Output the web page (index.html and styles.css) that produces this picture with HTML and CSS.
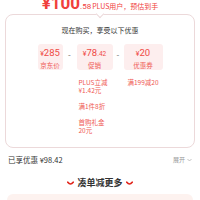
FILE: index.html
```html
<!DOCTYPE html>
<html>
<head>
<meta charset="utf-8">
<link rel="stylesheet" href="styles.css">
</head>
<body>
<div class="top"><span class="big">¥100</span><span class="dec">.58</span><span class="plus">PLUS用户，预估到手</span></div>
<div class="card">
  <div class="notch"></div>
  <div class="title">现在购买，享受以下优惠</div>
  <div class="row">
    <div class="col c1">
      <div class="box"><div class="price"><span class="yen">¥</span>285</div><div class="lab">京东价</div></div>
    </div>
    <div class="op o1">-</div>
    <div class="col c2">
      <div class="box"><div class="price"><span class="yen">¥</span>78<span class="small">.42</span></div><div class="lab">促销</div></div>
      <div class="sub">PLUS立减¥1.42元</div>
      <div class="sub">满1件8折</div>
      <div class="sub">首购礼金20元</div>
    </div>
    <div class="op o2">-</div>
    <div class="col c3">
      <div class="box"><div class="price"><span class="yen">¥</span>20</div><div class="lab">优惠券</div></div>
      <div class="sub center">满199减20</div>
    </div>
  </div>
</div>
<div class="saved"><span>已享优惠 ¥98.42</span><span class="expand">展开<svg width="5" height="4" viewBox="0 0 5 4"><path d="M0.5 1 L2.5 3 L4.5 1" fill="none" stroke="#aaa" stroke-width="0.7"/></svg></span></div>
<div class="more"><svg class="chev" width="7" height="5" viewBox="0 0 7 5"><path d="M0.8 1.2 Q3.5 4.8 6.2 1.2" fill="none" stroke="#e1251b" stroke-width="1.6" stroke-linecap="round"/></svg><span>凑单减更多</span><svg class="chev" width="7" height="5" viewBox="0 0 7 5"><path d="M0.8 1.2 Q3.5 4.8 6.2 1.2" fill="none" stroke="#e1251b" stroke-width="1.6" stroke-linecap="round"/></svg></div>
<div class="bottom"></div>
</body>
</html>
```
FILE: styles.css
```css
html, body {
  margin: 0;
  padding: 0;
  background: #fff;
}
body {
  width: 200px;
  height: 200px;
  overflow: hidden;
  font-family: "Noto Sans CJK SC", "Noto Sans", sans-serif;
  color: #333;
}
.top {
  height: 20px;
  margin-top: -6px;
  display: flex;
  justify-content: center;
  align-items: baseline;
  color: #f0403c;
  line-height: 18px;
}
.big {
  font-size: 17px;
  font-weight: bold;
  font-family: "Roboto", "Liberation Sans", sans-serif;
}
.dec {
  font-size: 8px;
  font-family: "Roboto", "Liberation Sans", sans-serif;
}
.plus {
  font-size: 7px;
  margin-left: 1px;
}
.card {
  position: relative;
  margin: 0 5px;
  height: 132px;
  border: 1px solid #ecd9da;
  border-radius: 8px;
  box-sizing: content-box;
}
.notch {
  position: absolute;
  left: 91px;
  top: -4px;
  width: 5px;
  height: 5px;
  background: #fff;
  border-right: 1px solid #ecd9da;
  border-bottom: 1px solid #ecd9da;
  transform: rotate(45deg);
}
.title {
  margin-top: 11px;
  text-align: center;
  font-size: 7px;
  line-height: 9px;
  color: #333;
}
.row {
  display: flex;
  justify-content: center;
  margin-top: 9px;
}
.col {
  display: flex;
  flex-direction: column;
}
.c1 { width: 25px; }
.c2 { width: 36px; }
.c3 { width: 39px; }
.op {
  font-size: 8px;
  line-height: 22px;
  color: #666;
  text-align: center;
}
.o1 { width: 14px; }
.o2 { width: 11px; }
.box {
  background: #fdeeee;
  border-radius: 3px;
  height: 26px;
  box-sizing: border-box;
  padding-top: 3px;
  text-align: center;
  color: #ef4a45;
}
.price {
  font-size: 9.5px;
  line-height: 11px;
  font-family: "Roboto", "Liberation Sans", sans-serif;
}
.yen {
  font-size: 7px;
}
.small {
  font-size: 6.5px;
}
.lab {
  font-size: 6.5px;
  line-height: 9px;
  margin-top: 1px;
  color: #ef5a55;
}
.sub {
  font-size: 6.5px;
  line-height: 8px;
  color: #ef5a55;
  padding: 0 2px;
  margin-top: 8px;
}
.sub.center {
  text-align: center;
  padding: 0;
}
.saved {
  display: flex;
  justify-content: space-between;
  align-items: center;
  margin: 6px 8px 0 8px;
  font-size: 7.5px;
  line-height: 12px;
  color: #333;
}
.expand {
  font-size: 6px;
  color: #999;
  display: flex;
  align-items: center;
  gap: 2px;
}
.more {
  display: flex;
  justify-content: center;
  align-items: center;
  gap: 3px;
  margin-top: 11px;
  font-size: 9px;
  font-weight: bold;
  line-height: 12px;
  color: #333;
}
.bottom {
  margin: 5px 7px 0;
  height: 20px;
  background: #fdf2ef;
  border-radius: 6px 6px 0 0;
}
```
